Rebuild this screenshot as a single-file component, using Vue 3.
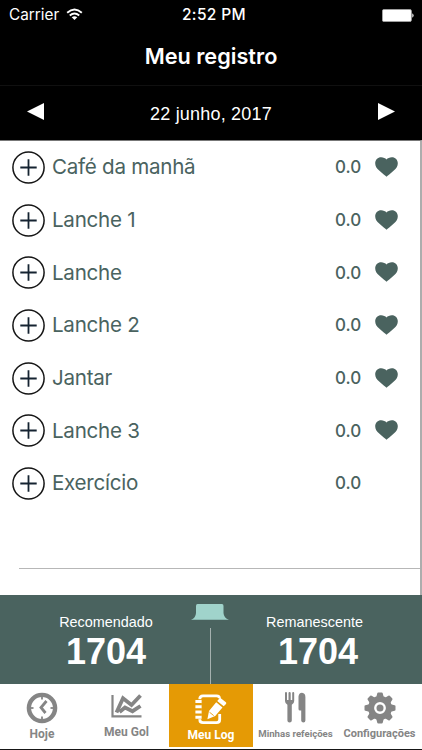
<script setup>
const meals = [
  { name: 'Café da manhã', key: 'cafe', fav: true },
  { name: 'Lanche 1', key: 'l1', fav: true },
  { name: 'Lanche', key: 'l', fav: true },
  { name: 'Lanche 2', key: 'l2', fav: true },
  { name: 'Jantar', key: 'jantar', fav: true },
  { name: 'Lanche 3', key: 'l3', fav: true },
  { name: 'Exercício', key: 'ex', fav: false },
]
const teeth = [0, 45, 90, 135, 180, 225, 270, 315]
const ticks = [0, 90, 180, 270]
</script>

<template>
  <div class="screen">
    <div class="status">
      <div class="carrier">
        <span class="carrier-name">Carrier</span>
        <svg class="wifi" width="17" height="13" viewBox="0 0 18 14" fill="none" stroke="#fff" stroke-width="2">
          <path d="M1.1 5.1Q9-2 16.9 5.1" />
          <path d="M3.9 8Q9 3.7 14.1 8" />
          <path d="M6 9.9Q9 7.6 12 9.9L9 12.9Z" fill="#fff" stroke="none" />
        </svg>
      </div>
      <span class="time">2:52 PM</span>
      <svg class="battery" width="32" height="13" viewBox="0 0 32 13">
        <rect x=".4" y=".4" width="29" height="12.2" rx="1.6" fill="#fff" stroke="#aaa" stroke-width=".8" />
        <path d="M30.3 4.3Q31.6 5 31.6 6.5T30.3 8.7Z" fill="#fff" />
      </svg>
    </div>
    <header class="title"><h1>Meu registro</h1></header>
    <div class="datebar">
      <svg width="17" height="17" viewBox="0 0 17 17"><path d="M0 8.5L17 0V17Z" fill="#fff" /></svg>
      <span class="date">22 junho, 2017</span>
      <svg width="17" height="17" viewBox="0 0 17 17"><path d="M17 8.5L0 0V17Z" fill="#fff" /></svg>
    </div>

    <main class="list">
      <div v-for="m in meals" :key="m.key" class="row">
        <svg class="plus" width="33" height="33" viewBox="0 0 33 33" fill="none">
          <circle cx="16.5" cy="16.5" r="15.6" stroke="#151515" stroke-width="1.5" />
          <path d="M8.3 16.5H24.7M16.5 8.3V24.7" stroke="#152331" stroke-width="1.8" />
        </svg>
        <span class="name">{{ m.name }}</span>
        <span class="value">0.0</span>
        <svg v-if="m.fav" class="heart" width="23" height="20" viewBox="0 0 23 20">
          <path d="M11.5 19.8C10.5 18.9 7.5 16.5 4.5 13.8C1.5 11.1 .2 9.3 .2 6.2C.2 2.8 2.8 .2 6.1 .2C8.4 .2 10.4 1.2 11.5 2.4C12.6 1.2 14.6 .2 16.9 .2C20.2 .2 22.8 2.8 22.8 6.2C22.8 9.3 21.5 11.1 18.5 13.8C15.5 16.5 12.5 18.9 11.5 19.8Z" fill="#4a635f" />
        </svg>
      </div>
      <div class="rule"></div>
    </main>

    <section class="summary">
      <div class="total recommended">
        <span class="label">Recomendado</span>
        <strong>1704</strong>
      </div>
      <div class="middle">
        <svg width="38" height="16" viewBox="0 0 38 16">
          <path d="M6.5 0H31Q32.5 0 32.5 2V9Q32.8 14 38 15.7H0Q4.7 14 5 9V2Q5 0 6.5 0Z" fill="#a0d3cb" />
        </svg>
        <div class="stem"></div>
      </div>
      <div class="total remaining">
        <span class="label">Remanescente</span>
        <strong>1704</strong>
      </div>
    </section>

    <nav class="tabs">
      <div class="tab today">
        <svg width="32" height="32" viewBox="0 0 32 32" fill="none" stroke="#858585">
          <circle cx="16" cy="16" r="13.1" stroke-width="4.4" />
          <path v-for="t in ticks" :key="t" d="M16 4V7.5" stroke-width="1.8" :transform="`rotate(${t} 16 16)`" />
          <path d="M20.5 9L15 15.5L19.5 21" stroke-width="2.8" />
        </svg>
        <span>Hoje</span>
      </div>
      <div class="tab goal">
        <svg width="31" height="24" viewBox="0 0 31 24" fill="none" stroke="#858585">
          <path d="M1.5 1V22.3H30.5" stroke-width="2.2" />
          <path d="M5.5 18.5L12 4.2L20.5 11L29.5 1.5" stroke-width="3.8" />
          <path d="M8.5 18L14 13.5L21.5 17.2L29.5 12" stroke-width="3.8" />
        </svg>
        <span>Meu Gol</span>
      </div>
      <div class="tab log">
        <svg width="32" height="31" viewBox="0 0 32 31" fill="none" stroke="#fff">
          <path d="M24.5 5V4.5Q24.5 1.8 21.5 1.8H8Q4.8 1.8 4.8 5V25.5Q4.8 28.7 8 28.7H21.5Q24.7 28.7 24.7 25.5V20" stroke-width="2.8" />
          <path d="M2 15.2H6.6" stroke="#e59a05" stroke-width="20" />
          <path d="M.4 7.4H6.6M.4 12.7H6.6M.4 18H6.6M.4 23.3H6.6" stroke-width="3" />
          <path d="M23.5 4L32 10L20 23L12 26L13 18Z" fill="#e59a05" stroke="none" />
          <path d="M14 17L21.2 8.3L27.5 13.5L20.2 22L12.4 25.2ZM22.2 7L24.4 4.5Q25.2 3.8 26.1 4.5L30.9 8.2Q31.7 9 31 9.9L28.7 12.3Z" fill="#fff" stroke="none" />
          <path d="M14.5 18.2L18.7 21.6" stroke="#e59a05" stroke-width=".9" />
        </svg>
        <span>Meu Log</span>
      </div>
      <div class="tab meals">
        <svg width="21" height="31" viewBox="0 0 21 31" fill="#858585">
          <path d="M0 1Q0 0 1 0T2 1V8H3.5V1Q3.5 0 4.6 0T5.7 1V8H7.2V1Q7.2 0 8.2 0T9.2 1V9Q9.2 11.5 6.8 12.7V28.5Q6.8 30.5 4.6 30.5T2.4 28.5V12.7Q0 11.5 0 9Z" />
          <path d="M13.5 4.5Q13.8 .7 17 .7Q20.4 1 20.4 5V28.5Q20.4 30.5 18.4 30.5T16.2 28.5V18.5H15Q13.5 18.5 13.5 17Z" />
        </svg>
        <span>Minhas refeições</span>
      </div>
      <div class="tab settings">
        <svg width="32" height="32" viewBox="0 0 32 32">
          <path v-for="t in teeth" :key="t" d="M11.8 7L13.2 1.4Q13.4.5 14.3.5H17.7Q18.6.5 18.8 1.4L20.2 7Z" fill="#858585" :transform="`rotate(${t} 16 16)`" />
          <circle cx="16" cy="16" r="8.9" fill="none" stroke="#858585" stroke-width="6" />
          <circle cx="16" cy="16" r="3.5" fill="#858585" />
        </svg>
        <span>Configurações</span>
      </div>
    </nav>
  </div>
</template>

<style>
body { margin: 0; background: #161616; }
</style>

<style scoped>
.screen {
  width: 422px;
  height: 750px;
  display: flex;
  flex-direction: column;
  overflow: hidden;
  background: #161616;
  color: #fff;
  font-family: Inter, "Liberation Sans", sans-serif;
}
.screen * { box-sizing: border-box; }
svg { display: block; flex: none; }
.status {
  height: 30px;
  background: #000;
  display: grid;
  grid-template-columns: 1fr auto 1fr;
  align-items: center;
  padding: 0 8px 0 9px;
  font-size: 15.5px;
  line-height: 20px;
}
.carrier { display: flex; align-items: center; gap: 7px; }
.carrier-name { font-size: 15.3px; }
.wifi { margin-top: -2px; }
.time { font-weight: 500; letter-spacing: .35px; padding-left: 5px; }
.battery { justify-self: end; }
.title { height: 56px; background: #000; border-bottom: 1px solid #101010; text-align: center; }
.title h1 { margin: 0; padding-top: 12px; font-size: 21.7px; line-height: 28px; font-weight: 600; }
.datebar {
  height: 54px;
  background: #000;
  display: flex;
  justify-content: space-between;
  align-items: flex-start;
  padding: 17px 27px 0;
}
.date { font-family: "Liberation Sans", sans-serif; font-size: 18px; letter-spacing: .2px; line-height: 22px; }
.list {
  height: 455px;
  background: #fff;
  border-top: 1px solid #777;
  border-right: 2px solid #adadad;
}
.row {
  height: 52.7px;
  display: flex;
  align-items: center;
  padding-left: 12px;
  color: #4a635f;
}
.name { margin-left: 7px; flex: none; width: 228px; white-space: nowrap; font-size: 20.6px; letter-spacing: -.27px; line-height: 28px; }
.value { width: 54px; padding-left: 55px; margin-right: 40px; font-size: 17px; font-weight: 500; }
.heart { margin-top: -1px; }
.rule { height: 1px; background: #b7b7b7; margin: 58px 0 0 19px; }
.summary { height: 89px; flex: none; background: #4a635f; display: grid; grid-template-columns: 191px 38px 193px; }
.total { display: flex; flex-direction: column; align-items: center; font-family: "Liberation Sans", sans-serif; padding-top: 18px; }
.recommended { padding-left: 21px; }
.remaining { padding-right: 15px; }
.remaining .label { margin-right: 7px; }
.label { font-size: 14.4px; line-height: 19px; }
.total strong { font-size: 36px; line-height: 40px; }
.middle { padding-top: 9px; display: flex; flex-direction: column; align-items: center; }
.stem { width: 1px; flex: 1; margin-top: 8px; background: #a5b1af; }
.tabs {
  height: 65px;
  flex: none;
  background: #fff;
  display: grid;
  grid-template-columns: 84px 85px 84px 85px 84px;
  color: #858585;
  font-family: Roboto, sans-serif;
  font-weight: 700;
}
.tab {
  display: flex;
  flex-direction: column;
  justify-content: space-between;
  align-items: center;
  white-space: nowrap;
  font-size: 12px;
  line-height: 16px;
  padding: 8px 0 7px;
}
.goal { padding: 10px 0 9px; }
.log { background: #e59a05; color: #fff; height: 63px; padding: 10px 0 4px; }
.meals span { font-size: 9.65px; }
.settings { padding: 8px 1px 7px 0; }
.settings span { font-size: 11px; }
</style>
